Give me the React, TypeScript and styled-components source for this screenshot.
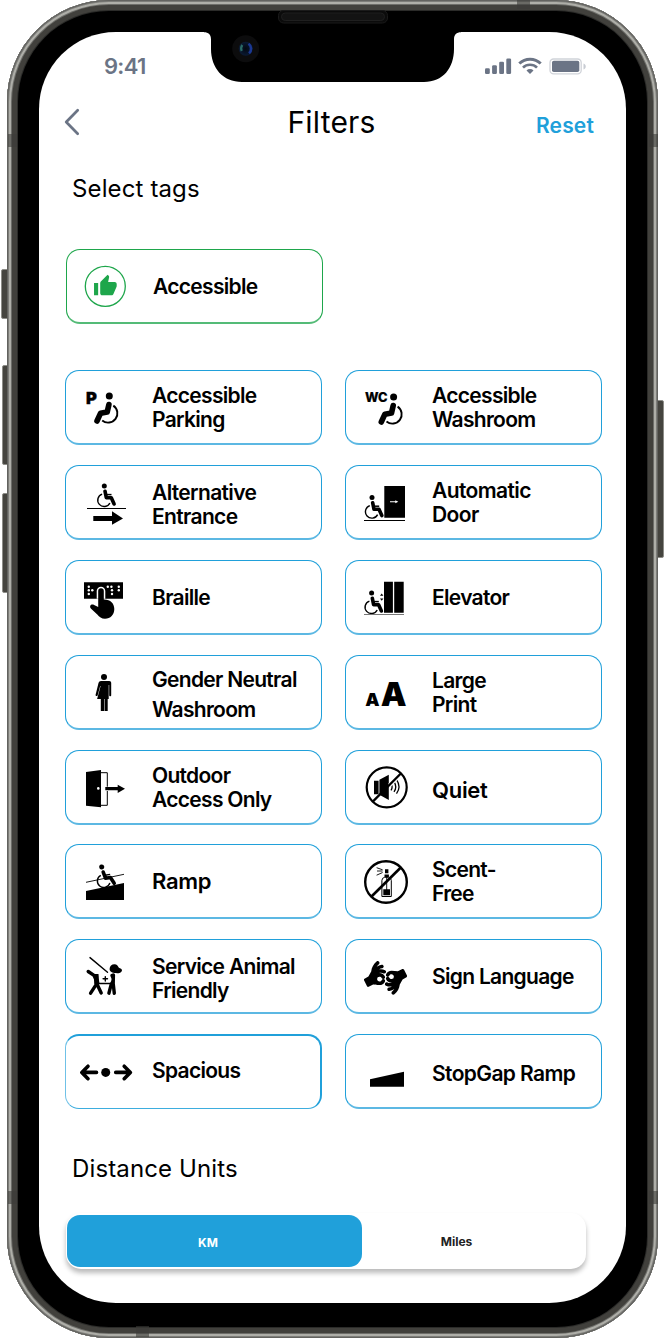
import React from 'react';
import styled, { createGlobalStyle } from 'styled-components';
import { FaAmericanSignLanguageInterpreting } from 'react-icons/fa';

const BLUE = '#20a0da';
const GREEN = '#1ea64b';
const SLATE = '#6b7485';

const GlobalStyle = createGlobalStyle`
  *, *::before, *::after { box-sizing: border-box; }
  html, body { margin: 0; padding: 0; background: #fff; }
  body { font-family: Inter, "Liberation Sans", sans-serif; color: #000; overflow: hidden; }
  button { font: inherit; color: inherit; background: none; border: 0; padding: 0; margin: 0; cursor: pointer; }
  svg { display: block; }
`;

const Stage = styled.div`
  position: relative;
  width: 664px;
  height: 1344px;
  padding-left: 7px;
  overflow: hidden;
`;

const Phone = styled.main`
  position: relative;
  width: 651px;
  height: 1338px;
  padding: 32px;
  border-radius: 102px;
  background: #000;
  box-shadow:
    inset 0 0 0 1px #62625f,
    inset 0 0 0 2px #7d7d79,
    inset 0 0 0 4px #aeaea8,
    inset 0 0 0 5px #6d6d69,
    inset 0 0 0 10px #41403c,
    inset 0 0 0 11px #2b2b29;
`;

const SideKey = styled.i<{ $x: number; $y: number; $w: number; $h: number }>`
  position: absolute;
  left: ${p => p.$x}px;
  top: ${p => p.$y}px;
  width: ${p => p.$w}px;
  height: ${p => p.$h}px;
  border-radius: 2px;
  background: #45443f;
  border: 1px solid #8d8d88;
`;

const AntennaBand = styled.i<{ $x: number; $y: number; $w: number; $h: number }>`
  position: absolute;
  left: ${p => p.$x}px;
  top: ${p => p.$y}px;
  width: ${p => p.$w}px;
  height: ${p => p.$h}px;
  background: rgba(60, 60, 56, 0.6);
`;

const Notch = styled.svg`
  position: absolute;
  left: 197px;
  top: 9px;
`;

const Screen = styled.section`
  width: 587px;
  height: 1271px;
  border-radius: 77px;
  background: #fff;
  overflow: hidden;
  display: flex;
  flex-direction: column;
`;

const StatusBar = styled.div`
  display: flex;
  justify-content: space-between;
  align-items: center;
  height: 68px;
  padding: 0 39px 0 65px;
  color: ${SLATE};
`;

const Clock = styled.time`
  font-size: 22px;
  line-height: 26px;
  font-weight: 600;
  letter-spacing: -0.7px;
`;

const StatusIcons = styled.div`
  display: flex;
  align-items: center;
`;

const NavBar = styled.header`
  display: grid;
  grid-template-columns: 120px 1fr 120px;
  align-items: center;
  height: 44px;
  padding: 0 32px 0 25px;
`;

const BackButton = styled.button`
  justify-self: start;
`;

const Title = styled.h1`
  margin: 0;
  padding-left: 5px;
  text-align: center;
  font-size: 30px;
  line-height: 36px;
  font-weight: 430;
  letter-spacing: 0.2px;
`;

const ResetButton = styled.button`
  justify-self: end;
  padding-top: 8px;
  font-size: 21px;
  line-height: 26px;
  font-weight: 600;
  letter-spacing: 0.15px;
  color: ${BLUE};
`;

const SectionTitle = styled.h2<{ $top: number }>`
  margin: ${p => p.$top}px 0 0 33px;
  font-size: 24px;
  line-height: 30px;
  font-weight: 430;
  letter-spacing: 0.13px;
`;

const Featured = styled.div`
  margin: 45px 0 0 27px;
`;

const TagGrid = styled.div`
  display: grid;
  grid-template-columns: 257px 257px;
  grid-template-rows: repeat(4, 75px) 74px repeat(3, 75px);
  gap: 20px 23px;
  margin: 46px 0 0 26px;
`;

type Tone = 'blue' | 'green' | 'accent';

const edges: Record<Tone, string> = {
  blue: `border-width: 1px 1px 2px; border-color: ${BLUE} ${BLUE} #5cb8e3;`,
  green: `border-width: 1px 1px 2px; border-color: ${GREEN} ${GREEN} #54bb77;`,
  accent: `border-width: 2px 2px 1px 1px; border-color: ${BLUE} ${BLUE} #3dadde #6fc1e7;`,
};

const Card = styled.button<{ $tone: Tone }>`
  display: flex;
  align-items: flex-start;
  width: 257px;
  height: 75px;
  border-style: solid;
  ${p => edges[p.$tone]}
  border-radius: 14px;
  background: #fff;
  text-align: left;
`;

const Glyph = styled.svg`
  flex: none;
  width: 86px;
  height: 72px;
`;

const Label = styled.span<{ $top: number; $lead: number; $size: number; $track: number }>`
  margin-top: ${p => p.$top}px;
  font-size: ${p => p.$size}px;
  line-height: ${p => p.$lead}px;
  font-weight: 600;
  letter-spacing: ${p => p.$track}px;
  white-space: pre-line;
`;

const Units = styled.div`
  display: flex;
  width: 520px;
  height: 56px;
  margin: 29px 0 0 27px;
  padding: 2px 1px;
  border-radius: 15px;
  background: #fff;
  box-shadow: 0 4px 5px rgba(0, 0, 0, 0.27);
`;

const Unit = styled.button<{ $active?: boolean }>`
  flex: ${p => (p.$active ? '0 0 295px' : '0 0 191px')};
  height: 52px;
  padding-right: ${p => (p.$active ? 13 : 2)}px;
  padding-top: ${p => (p.$active ? 2 : 0)}px;
  border-radius: 13px;
  background: ${p => (p.$active ? BLUE : 'transparent')};
  color: ${p => (p.$active ? '#fff' : '#222')};
  font-size: 12px;
  font-weight: 700;
`;

const Seated = ({ x, y, turn = 0 }: { x: number; y: number; turn?: number }) => (
  <g transform={`translate(${x} ${y}) rotate(${turn})`} fill="none" stroke="#000" strokeLinejoin="round">
    <circle r="2.5" fill="#000" stroke="none" />
    <path d="M.7 5.2 2 11.7h5l2.800 6.300" strokeWidth="3.600" strokeLinecap="round" />
    <path d="M2 8.600h5.200" strokeWidth="1.500" />
    <path d="M-2.200 8.100A6.400 6.400 0 1 0 5.600 17" strokeWidth="1.400" />
  </g>
);

const Reclined = () => (
  <g fill="none" stroke="#000">
    <circle cx="44.300" cy="26" r="3.500" fill="#000" stroke="none" />
    <path d="M43.900 34.600 42.200 42 35.600 43.200 32 51" strokeWidth="5.600" strokeLinecap="round" strokeLinejoin="round" />
    <path d="M48.300 35.600A9.300 9.300 0 1 1 37.200 50.500" strokeWidth="1.900" />
  </g>
);

const icons = {
  thumb: (
    <>
      <circle cx="39.300" cy="37.300" r="20" fill="none" stroke={GREEN} strokeWidth="1.300" />
      <path
        transform="translate(27 24.700) scale(1.030)"
        fill={GREEN}
        d="M1 21h4V9H1v12zm22-11c0-1.100-.9-2-2-2h-6.310l.95-4.570.03-.32c0-.41-.17-.79-.44-1.060L14.170 1 7.590 7.590C7.220 7.950 7 8.450 7 9v10c0 1.100.9 2 2 2h9c.83 0 1.540-.5 1.840-1.220l3.020-7.050c.09-.23.14-.47.14-.73v-2z"
      />
    </>
  ),
  parking: (
    <>
      <text x="21" y="34.300" fontFamily="Inter, sans-serif" fontWeight="900" fontSize="16.500" stroke="#000" strokeWidth=".4">P</text>
      <Reclined />
    </>
  ),
  washroom: (
    <>
      <text x="20" y="31.700" fontFamily="Inter, sans-serif" fontWeight="800" fontSize="12.800" letterSpacing="-0.1" stroke="#000" strokeWidth=".2">WC</text>
      <g transform="translate(4.300 1)"><Reclined /></g>
    </>
  ),
  entrance: (
    <>
      <Seated x={39.300} y={21} />
      <path d="M22 43.500h39" stroke="#000" />
      <path d="M28.300 51H47v-4.700l11 7.200-11 6.200V56H28.300z" />
    </>
  ),
  door: (
    <>
      <Seated x={27} y={32.600} />
      <path d="M39.300 21H60v31.700H39.300zM19 54.900h41v1H19z" />
      <path d="M45 36.200h5.300v-1l3 1.500-3 1.500v-1H45z" fill="#fff" />
    </>
  ),
  braille: (
    <>
      <path d="M19 22.300h39v16.400H19z" />
      <g fill="#fff">
        {[[23.800, 26.800], [23.800, 30.300], [23.800, 34], [27.300, 30.300], [42.800, 26.800], [46.400, 26.800], [47, 30.300], [47, 34], [53.800, 26.800], [53.800, 30.300]].map(([cx, cy]) => (
          <circle key={`${cx}-${cy}`} cx={cx} cy={cy} r="1.200" />
        ))}
      </g>
      <path d="M31.700 38.700V31a4.300 4.300 0 0 1 8.600 0v7.700z" fill="#fff" />
      <path d="M33.200 47V31a2.800 2.800 0 0 1 5.600 0v8.400c6.500-.2 10.500 3.900 10.500 9.600 0 5.700-3.800 9.700-9.300 9.700-3.600 0-5.600-1.500-7.700-4.200l-6.200-5.700c-2.500-3 .4-5.400 3-3.800z" />
    </>
  ),
  elevator: (
    <>
      <Seated x={26.600} y={33} />
      <path d="M39 21.700h8.900v31H39zM49.200 21.700h9.500v31h-9.500z" />
      <path d="M19 54.500h40" stroke="#777" />
      <path d="m36.700 33.600 1.700 2.200H35zM36.700 40.800l-1.700-2.200h3.400z" />
    </>
  ),
  neutral: (
    <>
      <circle cx="39" cy="21.900" r="3" />
      <path d="M36 25.900h8.200c1.300 0 2 .9 2 2v12.300c0 1.400-2 1.400-2 0V30h-.5v14.100h-1V56h-3.100V44.100h-.5V56h-3.300V44.100h-3.700L35.600 31l-.4-.1-2.600 9.500c-.5 1.200-2.300.7-2-.6l2.900-11.700c.4-1.400 1.200-2.200 2.500-2.200z" />
    </>
  ),
  print: (
    <>
      <text x="20.200" y="50.700" fontFamily="Inter, sans-serif" fontWeight="900" fontSize="18">A</text>
      <text x="35.700" y="50.700" fontFamily="Inter, sans-serif" fontWeight="900" fontSize="32.500">A</text>
    </>
  ),
  outdoor: (
    <>
      <path d="M36 22.700h6.300v14M42.300 41v14.300H36" fill="none" stroke="#000" />
      <path d="m21 22 15-2v37.300l-15-1.600z" />
      <circle cx="33.300" cy="38.400" r="1.300" fill="#fff" />
      <path d="M40.300 37h12.400v-2.300l7.300 4-7.300 4.300v-2.700H40.300z" />
    </>
  ),
  quiet: (
    <g fill="none" stroke="#000">
      <circle cx="41.700" cy="37.300" r="20" strokeWidth="2.200" />
      <path d="M29 30.700h4.600v13.600H29zM34.400 29.700l9.400-5v25.400l-9.400-5.400z" fill="#000" stroke="none" />
      <path d="M46 33.600q2.200 3.400 0 6.800M49 31.600q3.500 5.200 0 10.300M51.500 29.600q5 7.200 0 14" strokeWidth="1.300" />
      <path d="M55 24.700 44.500 35.300" stroke="#fff" strokeWidth="4" />
      <path d="m27.500 51.900 28.600-28.600" strokeWidth="2.300" />
    </g>
  ),
  ramp: (
    <>
      <path d="m21 38.300 38-8" stroke="#000" strokeWidth=".9" />
      <Seated x={36.700} y={23} turn={-9} />
      <path d="m21 46.900 38-7.900v17H21z" />
    </>
  ),
  scent: (
    <g fill="none" stroke="#000">
      <path d="M36.900 52.500V36.500q0-2.800 2.800-3.200h3.800q2.800.4 2.800 3.200v16z" strokeWidth="1" />
      <path d="M40 25.300h3.400v4H40zM39.500 30.400h4.400v2.600h-4.400zM38.300 45.300h6.700v6h-6.700z" fill="#000" stroke="none" />
      <path d="M41.700 33v13M37.500 27H32M37.600 25.800 31.600 23.700M37.600 28.500 31.600 31.200" strokeWidth=".9" />
      <path d="m26.500 52.500 29.300-29" strokeWidth="2.600" />
      <circle cx="41" cy="38" r="20.800" strokeWidth="2.400" />
    </g>
  ),
  animal: (
    <g fill="none" stroke="#000" strokeLinecap="round" strokeLinejoin="round">
      <path d="m25 18.600 17.500 14.600" strokeWidth="1.400" />
      <path d="M44.600 30c0-3.300 2.300-4.900 5-4.800 2.200.1 3.300 1.600 4.300 3.500 1.400.8 3.300 1.100 3.100 2.700-.3 2.500-4 3-6.500 2.700-3-.2-5.900-1.200-5.900-4.100z" fill="#000" stroke="none" />
      <path d="m23.200 32.500 5.800 3.900 3.600 7-7 10.800M31.500 44l4.700 10" strokeWidth="3.400" />
      <path d="M28.500 35h5l.8 10h-5z" fill="#000" stroke="none" />
      <path d="M34 44.500h12" strokeWidth="1.300" />
      <path d="M47 36.500c1.500 2.200 1.500 6-.8 8.900l-2.300 8.800M48.400 36l-.2 8.500 1.100 9.700" strokeWidth="3.400" />
      <path d="M40.300 37.600v4.400M38.100 39.800h4.400" strokeWidth="1.400" />
    </g>
  ),
  sign: <FaAmericanSignLanguageInterpreting x={18.900} y={17.300} size={43.200} />,
  spacious: (
    <g fill="none" stroke="#000" strokeWidth="3.600" strokeLinecap="round" strokeLinejoin="round">
      <path d="M31.500 37.400H17.200M23 31.200l-6.200 6.200 6.200 6.300M50.700 37.400H65M59.200 31.200l6.200 6.200-6.200 6.300" />
      <circle cx="40.700" cy="37.400" r="4.500" fill="#000" stroke="none" />
    </g>
  ),
  stopgap: <path d="m25 45.300 34-7.600v15H25z" />,
};

interface Tag {
  text: string;
  icon: keyof typeof icons;
  top?: number;
  lead?: number;
  size?: number;
  track?: number;
  tone?: Tone;
}

const tags: Tag[] = [
  { text: 'Accessible\nParking', icon: 'parking', top: 13 },
  { text: 'Accessible\nWashroom', icon: 'washroom', top: 13 },
  { text: 'Alternative\nEntrance', icon: 'entrance', top: 15, track: -0.65 },
  { text: 'Automatic\nDoor', icon: 'door', top: 13, track: -0.6 },
  { text: 'Braille', icon: 'braille' },
  { text: 'Elevator', icon: 'elevator' },
  { text: 'Gender Neutral\nWashroom', icon: 'neutral', top: 9, lead: 30 },
  { text: 'Large\nPrint', icon: 'print', top: 13 },
  { text: 'Outdoor\nAccess Only', icon: 'outdoor', top: 13 },
  { text: 'Quiet', icon: 'quiet', top: 27, size: 22, track: -0.3 },
  { text: 'Ramp', icon: 'ramp', top: 24, size: 22, track: -0.3 },
  { text: 'Scent-\nFree', icon: 'scent', top: 13 },
  { text: 'Service Animal\nFriendly', icon: 'animal', top: 15 },
  { text: 'Sign Language', icon: 'sign' },
  { text: 'Spacious', icon: 'spacious', top: 23, tone: 'accent' },
  { text: 'StopGap Ramp', icon: 'stopgap', top: 27, track: -0.62 },
];

const TagCard = ({ text, icon, top = 25, lead = 24, size = 21, track = -0.7, tone = 'blue' }: Tag) => (
  <Card $tone={tone}>
    <Glyph viewBox="1 1 86 72">{icons[icon]}</Glyph>
    <Label $top={top} $lead={lead} $size={size} $track={track}>{text}</Label>
  </Card>
);

export default function App() {
  return (
    <>
      <GlobalStyle />
      <Stage>
        <SideKey $x={1} $y={269} $w={8} $h={50} />
        <SideKey $x={2} $y={365} $w={7} $h={100} />
        <SideKey $x={2} $y={493} $w={7} $h={100} />
        <SideKey $x={656} $y={400} $w={8} $h={158} />
        <Phone>
          <Screen>
            <StatusBar>
              <Clock>9:41</Clock>
              <StatusIcons>
                <svg width="102" height="18" viewBox="485 57 102 18" fill={SLATE}>
                  <rect x="485" y="68.300" width="4.800" height="5.700" rx="1.300" />
                  <rect x="492.100" y="65.200" width="4.800" height="8.800" rx="1.300" />
                  <rect x="499.200" y="61.800" width="4.800" height="12.200" rx="1.300" />
                  <rect x="506.300" y="58.400" width="4.800" height="15.600" rx="1.300" />
                  <g fill="none" stroke={SLATE} strokeWidth="3">
                    <path d="M519.300 63.500a15.500 15.500 0 0 1 21.400 0" />
                    <path d="M523 67.600a10 10 0 0 1 14 0" strokeWidth="2.700" />
                  </g>
                  <path d="m530 73.900-3.500-3.500a5 5 0 0 1 7 0z" />
                  <rect x="550" y="59" width="31.200" height="14.800" rx="3.600" fill="none" stroke="#d0d3d9" strokeWidth="1.300" />
                  <rect x="552" y="60.800" width="27.300" height="11.200" rx="1.800" />
                  <path d="M583.500 63.400c3 1 3 5 0 6z" fill="#c8ccd3" />
                </svg>
              </StatusIcons>
            </StatusBar>
            <NavBar>
              <BackButton aria-label="Back">
                <svg width="17" height="28" viewBox="0 0 17 28" fill="none" stroke={SLATE} strokeWidth="2.700" strokeLinecap="round" strokeLinejoin="round">
                  <path d="M13.700 2.200 2.200 14l11.500 11.800" />
                </svg>
              </BackButton>
              <Title>Filters</Title>
              <ResetButton>Reset</ResetButton>
            </NavBar>
            <SectionTitle $top={30}>Select tags</SectionTitle>
            <Featured>
              <TagCard text="Accessible" icon="thumb" tone="green" />
            </Featured>
            <TagGrid>
              {tags.map(tag => <TagCard key={tag.text} {...tag} />)}
            </TagGrid>
            <SectionTitle $top={45}>Distance Units</SectionTitle>
            <Units>
              <Unit $active>KM</Unit>
              <Unit>Miles</Unit>
            </Units>
          </Screen>
          <Notch width="260" height="76" viewBox="204 9 260 76">
            <defs>
              <radialGradient id="lens" cx="50%" cy="50%" r="50%">
                <stop offset="0" stopColor="#020812" />
                <stop offset="1" stopColor="#0b1a33" />
              </radialGradient>
            </defs>
            <path d="M204 31v1.300c4.500 0 7 2 7 7.500V49c0 19 12 33 31 33h182c19 0 30-14 30-33v-9.200c0-5.500 2.500-7.500 7-7.500V31z" />
            <rect x="278.500" y="10.500" width="109" height="12.500" rx="5" fill="#0b0b0b" stroke="#1a1a1a" />
            <rect x="281.500" y="13" width="103" height="7.500" rx="3.700" fill="#131313" stroke="#1f1f1f" />
            <circle cx="245.700" cy="48.700" r="13.500" fill="#0c0c0d" />
            <circle cx="245.700" cy="48.700" r="7" fill="url(#lens)" />
            <path d="M242.300 45a6 6 0 0 0-.6 6" fill="none" stroke="#2a6a66" strokeWidth="2.200" />
            <path d="M248.500 43.800a6 6 0 0 1 .5 9.500" fill="none" stroke="#1b3893" strokeWidth="2.600" />
          </Notch>
        </Phone>
        <AntennaBand $x={8} $y={134} $w={9} $h={13} />
        <AntennaBand $x={649} $y={134} $w={9} $h={13} />
        <AntennaBand $x={8} $y={1191} $w={9} $h={13} />
        <AntennaBand $x={649} $y={1191} $w={9} $h={13} />
        <AntennaBand $x={517} $y={0} $w={13} $h={9} />
        <AntennaBand $x={136} $y={1326} $w={13} $h={11} />
      </Stage>
    </>
  );
}
